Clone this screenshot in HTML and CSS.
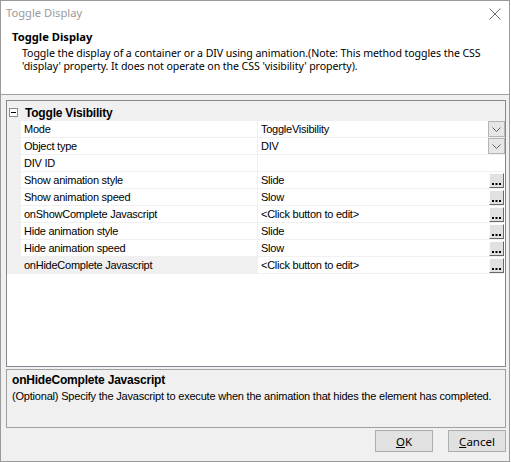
FILE: index.html
```html
<!DOCTYPE html>
<html>
<head>
<meta charset="utf-8">
<link rel="stylesheet" href="styles.css">
</head>
<body>
<div class="window">
  <div class="titlebar">
    <span class="title">Toggle Display</span>
    <svg class="close" width="12" height="12" viewBox="0 0 12 12"><path d="M0.5 0.5 L11.5 11.5 M11.5 0.5 L0.5 11.5" stroke="#6f6f6f" stroke-width="1" fill="none"/></svg>
  </div>
  <div class="header">
    <div class="h-title">Toggle Display</div>
    <div class="h-desc">Toggle the display of a container or a DIV using animation.(Note: This method toggles the CSS<br>'display' property. It does not operate on the CSS 'visibility' property).</div>
  </div>
  <div class="content">
    <div class="grid">
      <div class="cat">
        <div class="gut"><span class="minus"></span></div>
        <span class="cat-text">Toggle Visibility</span>
      </div>
      <div class="row"><div class="gut"></div><div class="lbl">Mode</div><div class="val"><span>ToggleVisibility</span><span class="dd"><svg width="9" height="5" viewBox="0 0 9 5"><path d="M0.5 0.5 L4.5 4.5 L8.5 0.5" stroke="#606060" fill="none"/></svg></span></div></div>
      <div class="row"><div class="gut"></div><div class="lbl">Object type</div><div class="val"><span>DIV</span><span class="dd"><svg width="9" height="5" viewBox="0 0 9 5"><path d="M0.5 0.5 L4.5 4.5 L8.5 0.5" stroke="#606060" fill="none"/></svg></span></div></div>
      <div class="row"><div class="gut"></div><div class="lbl">DIV ID</div><div class="val"><span></span></div></div>
      <div class="row"><div class="gut"></div><div class="lbl">Show animation style</div><div class="val"><span>Slide</span><span class="ell"><svg width="9" height="2" viewBox="0 0 9 2"><rect x="0" y="0" width="2" height="2"/><rect x="3.5" y="0" width="2" height="2"/><rect x="7" y="0" width="2" height="2"/></svg></span></div></div>
      <div class="row"><div class="gut"></div><div class="lbl">Show animation speed</div><div class="val"><span>Slow</span><span class="ell"><svg width="9" height="2" viewBox="0 0 9 2"><rect x="0" y="0" width="2" height="2"/><rect x="3.5" y="0" width="2" height="2"/><rect x="7" y="0" width="2" height="2"/></svg></span></div></div>
      <div class="row"><div class="gut"></div><div class="lbl">onShowComplete Javascript</div><div class="val"><span>&lt;Click button to edit&gt;</span><span class="ell"><svg width="9" height="2" viewBox="0 0 9 2"><rect x="0" y="0" width="2" height="2"/><rect x="3.5" y="0" width="2" height="2"/><rect x="7" y="0" width="2" height="2"/></svg></span></div></div>
      <div class="row"><div class="gut"></div><div class="lbl">Hide animation style</div><div class="val"><span>Slide</span><span class="ell"><svg width="9" height="2" viewBox="0 0 9 2"><rect x="0" y="0" width="2" height="2"/><rect x="3.5" y="0" width="2" height="2"/><rect x="7" y="0" width="2" height="2"/></svg></span></div></div>
      <div class="row"><div class="gut"></div><div class="lbl">Hide animation speed</div><div class="val"><span>Slow</span><span class="ell"><svg width="9" height="2" viewBox="0 0 9 2"><rect x="0" y="0" width="2" height="2"/><rect x="3.5" y="0" width="2" height="2"/><rect x="7" y="0" width="2" height="2"/></svg></span></div></div>
      <div class="row"><div class="gut"></div><div class="lbl sel">onHideComplete Javascript</div><div class="val"><span>&lt;Click button to edit&gt;</span><span class="ell"><svg width="9" height="2" viewBox="0 0 9 2"><rect x="0" y="0" width="2" height="2"/><rect x="3.5" y="0" width="2" height="2"/><rect x="7" y="0" width="2" height="2"/></svg></span></div></div>
    </div>
    <div class="help">
      <div class="help-title">onHideComplete Javascript</div>
      <div class="help-desc">(Optional) Specify the Javascript to execute when the animation that hides the element has completed.</div>
    </div>
    <div class="buttons">
      <button class="btn"><u>O</u>K</button>
      <button class="btn"><u>C</u>ancel</button>
    </div>
  </div>
</div>
</body>
</html>
```

FILE: styles.css
```css
html, body {
  margin: 0;
  padding: 0;
  background: #ffffff;
}
body {
  width: 511px;
  height: 462px;
  overflow: hidden;
}
.window {
  box-sizing: border-box;
  width: 510px;
  height: 462px;
  border: 1px solid #9a9a9a;
  display: flex;
  flex-direction: column;
  background: #ffffff;
}
.titlebar {
  height: 28px;
  flex: none;
  display: flex;
  align-items: center;
  justify-content: space-between;
  padding: 0 8px 5px 5px;
  box-sizing: border-box;
}
.title {
  font-family: "Noto Sans", sans-serif;
  font-size: 11.2px;
  color: #9a9a9a;
}
.close {
  display: block;
  margin-top: 3px;
}
.header {
  height: 66px;
  flex: none;
  border-bottom: 1px solid #a0a0a0;
  font-family: "Noto Sans", sans-serif;
  font-size: 10.6px;
  color: #000;
  padding-left: 11px;
  box-sizing: border-box;
}
.h-title {
  font-weight: bold;
  font-size: 11.2px;
  line-height: 16px;
  margin-top: 0;
}
.h-desc {
  padding-left: 10px;
  line-height: 13px;
  letter-spacing: -0.08px;
  white-space: nowrap;
  margin-top: 2px;
}
.content {
  flex: 1;
  background: #f0f0f0;
  padding: 5px 3px 0 5px;
  display: flex;
  flex-direction: column;
  font-family: "Liberation Sans", Arial, sans-serif;
  font-size: 11px;
}
.grid {
  box-sizing: border-box;
  width: 500px;
  height: 267px;
  flex: none;
  border: 1px solid #828790;
  background: #ffffff;
}
.cat {
  height: 20px;
  background: #f0f0f0;
  display: flex;
  align-items: center;
}
.cat .gut {
  width: 18px;
  height: 20px;
  display: flex;
  align-items: center;
}
.minus {
  box-sizing: border-box;
  width: 9px;
  height: 9px;
  border: 1px solid #8c8c8c;
  background: #fff;
  margin-left: 2px;
  margin-top: 3px;
  position: relative;
}
.minus::after {
  content: "";
  position: absolute;
  left: 1px;
  top: 3px;
  width: 5px;
  height: 1px;
  background: #000;
}
.cat-text {
  font-weight: bold;
  font-size: 12px;
  letter-spacing: -0.2px;
  padding-top: 3px;
}
.row {
  display: flex;
  height: 17px;
  box-sizing: border-box;
  border-bottom: 1px solid #f0f0f0;
  letter-spacing: -0.25px;
}
.gut {
  width: 14px;
  flex: none;
  background: #f0f0f0;
}
.lbl {
  flex: none;
  padding-left: 3px;
  box-sizing: border-box;
  line-height: 17px;
  border-right: 1px solid #f0f0f0;
  width: 237px;
  white-space: nowrap;
}
.lbl.sel {
  background: #f0f0f0;
}
.val {
  flex: 1;
  display: flex;
  justify-content: space-between;
  align-items: flex-start;
  padding-left: 3px;
  line-height: 17px;
  white-space: nowrap;
}
.dd {
  box-sizing: border-box;
  width: 17px;
  height: 16px;
  background: #e6e6e6;
  border: 1px solid #b4b4b4;
  display: flex;
  align-items: center;
  justify-content: center;
  padding-top: 1px;
}
.dd svg { display: block; }
.ell {
  box-sizing: border-box;
  width: 15px;
  height: 15px;
  margin: 1px 1px 0 0;
  background: #e1e1e1;
  border: 1px solid;
  border-color: #fcfcfc #696969 #696969 #fcfcfc;
  display: flex;
  align-items: flex-end;
  justify-content: center;
  padding-bottom: 2px;
}
.ell svg { display: block; fill: #000; }
.help {
  box-sizing: border-box;
  width: 500px;
  height: 59px;
  flex: none;
  margin-top: 2px;
  border: 1px solid #a0a0a0;
  padding: 3px 0 0 5px;
}
.help-title {
  font-weight: bold;
  font-size: 12px;
  letter-spacing: -0.2px;
  line-height: 15px;
}
.help-desc {
  line-height: 15px;
  margin-top: 1px;
  letter-spacing: -0.2px;
  white-space: nowrap;
}
.buttons {
  display: flex;
  justify-content: flex-end;
  gap: 15px;
  margin-top: 2px;
  width: 500px;
}
.btn {
  box-sizing: border-box;
  width: 58px;
  height: 22px;
  background: #e1e1e1;
  border: 1px solid #adadad;
  font-family: "Noto Sans", sans-serif;
  font-size: 11.5px;
  color: #000;
  padding: 0;
  border-radius: 0;
}
```
